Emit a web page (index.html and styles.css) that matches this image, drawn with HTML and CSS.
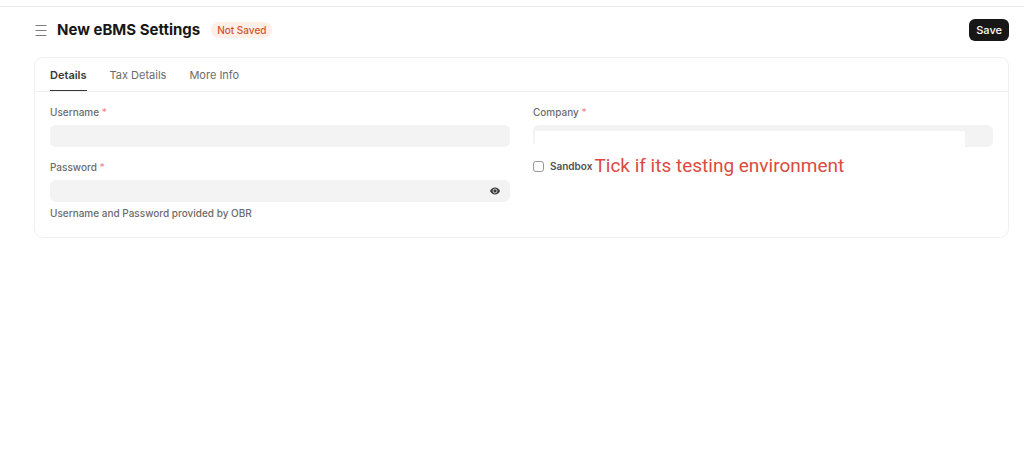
FILE: index.html
```
<!DOCTYPE html>
<html lang="en">
<head>
    <meta charset="UTF-8">
    <meta name="viewport" content="width=device-width, initial-scale=1.0">
    <title>New eBMS Settings</title>
    <link rel="stylesheet" href="styles.css">
</head>
<body>
    <div class="navbar-edge"></div>

    <header class="page-head">
        <button type="button" class="menu-btn" aria-label="Toggle sidebar">
            <svg width="12" height="12" viewBox="0 0 12 12" fill="none" stroke="#7c7c7c" stroke-linecap="round">
                <path d="M1 1.5h10M1 6.500h10M1 11.500h10"/>
            </svg>
        </button>
        <h1>New eBMS Settings</h1>
        <span class="indicator">Not Saved</span>
        <button type="button" class="save-btn">Save</button>
    </header>

    <main class="form-card">
        <nav class="tabs">
            <a href="#details" class="tab active">Details</a>
            <a href="#tax-details" class="tab">Tax Details</a>
            <a href="#more-info" class="tab">More Info</a>
        </nav>

        <form class="form-grid" id="details">
            <div class="column">
                <div class="field">
                    <label for="username">Username <span class="reqd">*</span></label>
                    <input type="text" id="username" class="control">
                </div>
                <div class="field">
                    <label for="password">Password <span class="reqd">*</span></label>
                    <div class="control-wrap">
                        <input type="password" id="password" class="control">
                        <button type="button" class="toggle-password" aria-label="Show password">
                            <svg width="10" height="8" viewBox="0 0 10 8">
                                <path d="M0 4C1.1 1.8 2.8.6 5 .6S8.900 1.800 10 4C8.900 6.200 7.200 7.400 5 7.400S1.100 6.200 0 4z" fill="#383838"/>
                                <circle cx="5" cy="4" r="2" fill="#383838" stroke="#d8d8d8" stroke-width=".9"/>
                            </svg>
                        </button>
                    </div>
                    <p class="help">Username and Password provided by OBR</p>
                </div>
            </div>

            <div class="column">
                <div class="field">
                    <label for="company">Company <span class="reqd">*</span></label>
                    <div class="control-wrap">
                        <input type="text" id="company" class="control">
                        <div class="cover"></div>
                    </div>
                </div>
                <div class="check-row">
                    <input type="checkbox" id="sandbox">
                    <label for="sandbox">Sandbox</label>
                    <span class="note">Tick if its testing environment</span>
                </div>
            </div>
        </form>
    </main>
</body>
</html>
```

FILE: styles.css
```
:root {
    --text-color: #171717;
    --text-muted: #6c6c6c;
    --border-color: #f0f0f0;
    --control-bg: #f3f3f3;
}

* {
    margin: 0;
    padding: 0;
    box-sizing: border-box;
}

body {
    font-family: Inter, "Liberation Sans", sans-serif;
    font-size: 11px;
    color: var(--text-color);
    background-color: white;
}

button {
    border: none;
    font-family: inherit;
    cursor: pointer;
}

.navbar-edge {
    height: 7px;
    border-bottom: 1px solid #ededed;
}

.page-head {
    display: flex;
    align-items: center;
    height: 50px;
    margin: 0 15px 0 34px;
    padding-bottom: 4px;
}

.menu-btn {
    display: flex;
    padding: 1px;
    margin: 0 9px 0 0;
    background: none;
}

.page-head h1 {
    font-size: 15px;
    line-height: 22px;
    font-weight: 700;
}

.indicator {
    margin-left: 11px;
    padding: 0 6px;
    border-radius: 8px;
    font-size: 10px;
    font-weight: 500;
    line-height: 16px;
    color: #d4532d;
    background-color: #fff0e7;
}

.save-btn {
    height: 22px;
    margin-left: auto;
    padding: 0 7px;
    border-radius: 6px;
    font-size: 11px;
    font-weight: 500;
    color: white;
    background-color: #171717;
}

.form-card {
    margin: 0 15px 0 34px;
    border: 1px solid var(--border-color);
    border-radius: 9px;
}

.tabs {
    display: flex;
    gap: 23px;
    padding: 0 15px;
    border-bottom: 1px solid var(--border-color);
}

.tab {
    height: 33px;
    font-size: 11px;
    line-height: 34px;
    color: var(--text-muted);
    text-decoration: none;
}

.tab.active {
    font-weight: 600;
    color: #383838;
    border-bottom: 1px solid #383838;
}

.form-grid {
    display: grid;
    grid-template-columns: 1fr 1fr;
    gap: 23px;
    padding: 12px 15px 16px;
}

.field {
    margin-bottom: 12px;
}

.field:last-child {
    margin-bottom: 0;
}

.field label {
    display: block;
    margin-bottom: 5px;
    font-size: 10px;
    font-weight: 500;
    line-height: 16px;
    color: var(--text-muted);
}

.reqd {
    color: #f08a8a;
}

.control-wrap {
    position: relative;
}

.control {
    display: block;
    width: 100%;
    height: 22px;
    padding: 0 8px;
    border: none;
    border-radius: 6px;
    font-family: inherit;
    font-size: 11px;
    background-color: var(--control-bg);
}

.toggle-password {
    position: absolute;
    top: 7px;
    right: 10px;
    display: flex;
    background: none;
}

.cover {
    position: absolute;
    top: 6px;
    bottom: 0;
    left: 2px;
    right: 28px;
    background-color: white;
}

.help {
    margin-top: 3px;
    font-size: 10px;
    font-weight: 500;
    line-height: 16px;
    color: var(--text-muted);
}

.check-row {
    display: flex;
    align-items: center;
    height: 22px;
    margin-top: -4px;
}

.check-row input {
    appearance: none;
    width: 11px;
    height: 11px;
    margin-right: 6px;
    border: 1px solid #999;
    border-radius: 3px;
}

.check-row label {
    font-size: 10px;
    font-weight: 600;
    color: #525252;
}

.note {
    margin-left: 2px;
    font-family: Roboto, "Liberation Sans", sans-serif;
    font-size: 19px;
    line-height: 22px;
    white-space: nowrap;
    color: #dc4a41;
}
```
